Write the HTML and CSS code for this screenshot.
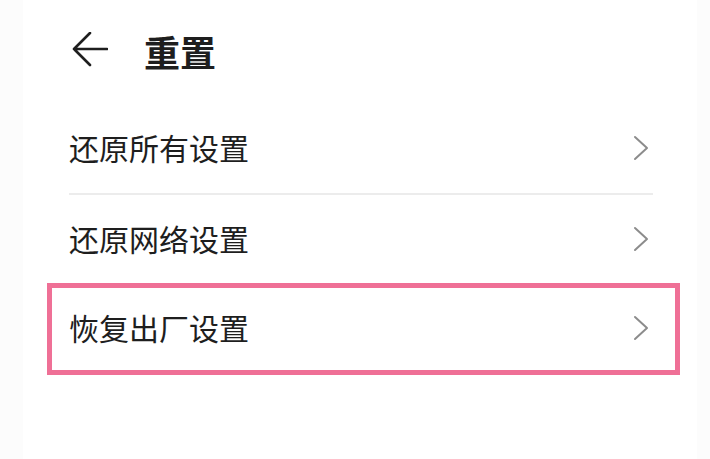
FILE: index.html
```html
<!DOCTYPE html>
<html lang="zh-CN">
<head>
    <meta charset="UTF-8">
    <meta name="viewport" content="width=device-width, initial-scale=1.0">
    <title>重置</title>
    <link rel="stylesheet" href="styles.css">
</head>
<body>
    <div class="screen">
        <div class="header">
            <svg class="back" width="36" height="36" viewBox="0 0 36 36">
                <path d="M35 17H2M18 1L2 17L18 33" fill="none" stroke="#1e1e1e" stroke-width="2.6" stroke-linecap="round" stroke-linejoin="round"/>
            </svg>
            <div class="title">重置</div>
        </div>
        <div class="list">
            <div class="item">
                <span class="label">还原所有设置</span>
                <svg class="chevron" width="16" height="26" viewBox="0 0 16 26">
                    <path d="M2 2L14 13L2 24" fill="none" stroke="#8c8c8c" stroke-width="2" stroke-linecap="round" stroke-linejoin="round"/>
                </svg>
            </div>
            <div class="item divided">
                <span class="label">还原网络设置</span>
                <svg class="chevron" width="16" height="26" viewBox="0 0 16 26">
                    <path d="M2 2L14 13L2 24" fill="none" stroke="#8c8c8c" stroke-width="2" stroke-linecap="round" stroke-linejoin="round"/>
                </svg>
            </div>
            <div class="item marked">
                <span class="label">恢复出厂设置</span>
                <svg class="chevron" width="16" height="26" viewBox="0 0 16 26">
                    <path d="M2 2L14 13L2 24" fill="none" stroke="#8c8c8c" stroke-width="2" stroke-linecap="round" stroke-linejoin="round"/>
                </svg>
                <div class="highlight"></div>
            </div>
        </div>
    </div>
</body>
</html>
```

FILE: styles.css
```css
body {
    margin: 0;
    background-color: #fcfcfc;
    font-family: "Noto Sans CJK SC", "Noto Sans", sans-serif;
    color: #1e1e1e;
}
.screen {
    width: 674px;
    height: 459px;
    margin-left: 23px;
    background-color: #fff;
}
.header {
    display: flex;
    align-items: center;
    height: 103px;
    padding-left: 49px;
    box-sizing: border-box;
}
.back {
    display: block;
    margin-top: -3px;
}
.title {
    margin-left: 36px;
    margin-top: -2px;
    font-size: 36px;
    font-weight: 700;
    line-height: 1;
}
.list {
    padding: 0 44px 0 46px;
}
.item {
    position: relative;
    display: flex;
    align-items: center;
    justify-content: space-between;
    height: 90px;
}
.divided {
    border-top: 2px solid #ececec;
    height: 88px;
}
.label {
    font-size: 30px;
    line-height: 1;
    margin-top: -3px;
}
.chevron {
    display: block;
    margin-right: 4px;
}
.highlight {
    position: absolute;
    left: -22px;
    right: -27px;
    top: 0;
    bottom: -2px;
    border: 5px solid #ef7096;
}
```
